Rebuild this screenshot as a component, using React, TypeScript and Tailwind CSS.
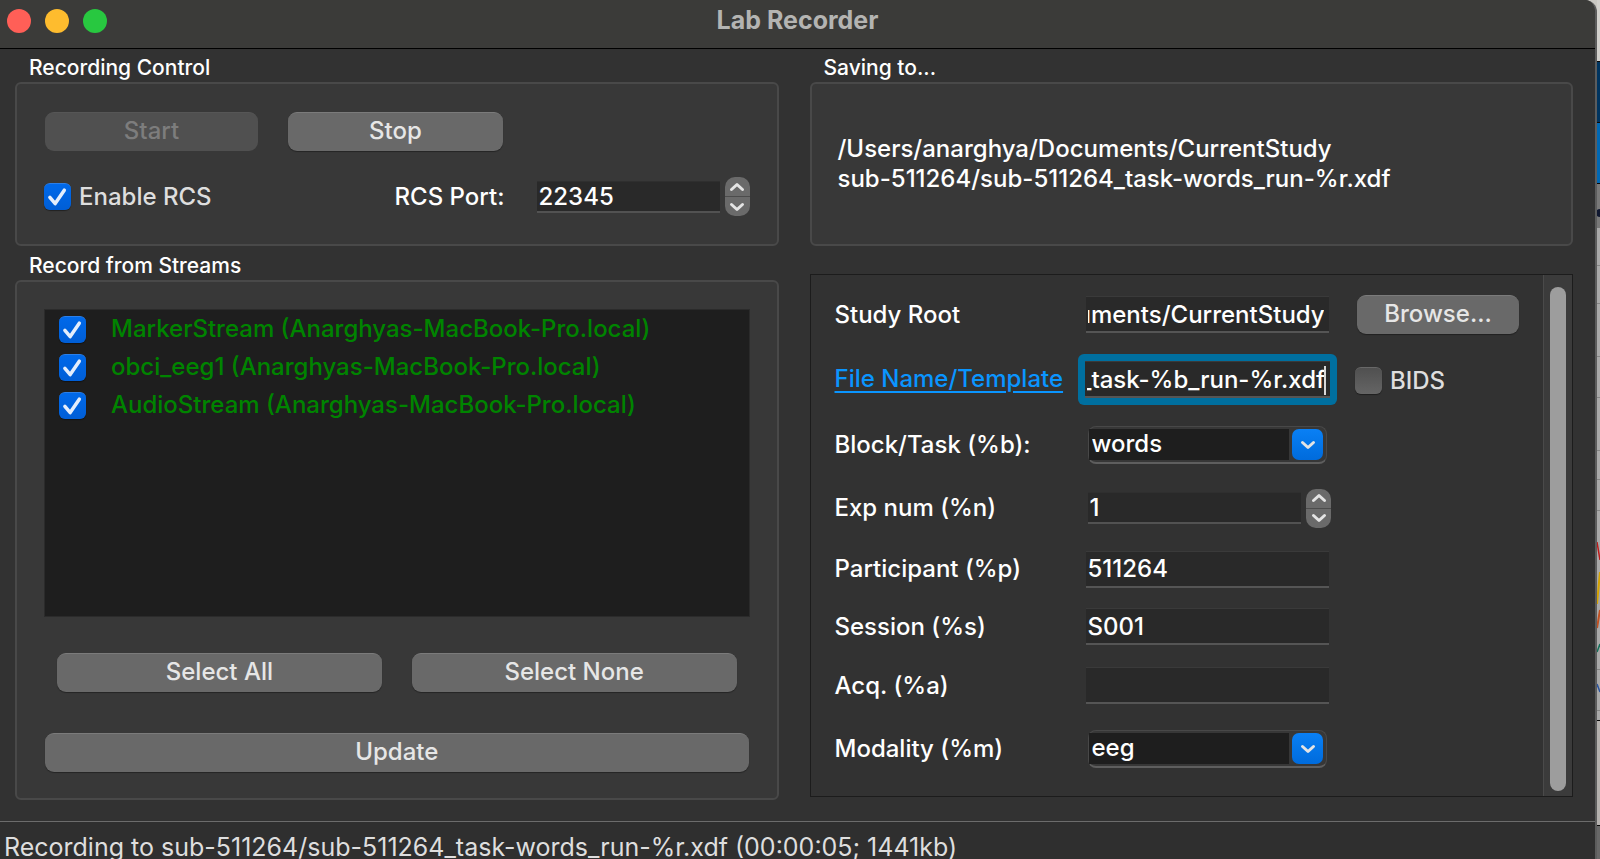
import { useEffect, useRef, useState, type ReactNode } from "react";

const STREAMS = ["MarkerStream", "obci_eeg1", "AudioStream"];
const HOST = "Anarghyas-MacBook-Pro.local";

function Check({ id, defaultChecked }: { id: string; defaultChecked?: boolean }) {
  return (
    <span className="relative flex size-[27px] shrink-0">
      <input
        id={id}
        type="checkbox"
        defaultChecked={defaultChecked}
        className="peer size-full appearance-none rounded-md border-t border-[#686868] bg-linear-to-b from-[#505050] to-[#656565] shadow-[0_1px_1px_rgba(0,0,0,0.4)] checked:border-[#2b7fe8] checked:from-[#0069ea] checked:to-[#005ed6]"
      />
      <svg
        viewBox="0 0 27 27"
        aria-hidden="true"
        className="pointer-events-none absolute inset-0 hidden size-full peer-checked:block"
      >
        <path
          d="M5.9 14.4 L11.2 20.6 L20.3 7.2"
          fill="none"
          stroke="#e4eefc"
          strokeWidth="3.5"
          strokeLinecap="round"
          strokeLinejoin="round"
        />
      </svg>
    </span>
  );
}

function PushButton({ children, disabled, className = "" }: { children: ReactNode; disabled?: boolean; className?: string }) {
  return (
    <button
      type="button"
      disabled={disabled}
      className={`flex h-[39px] items-center justify-center rounded-[9px] border-t border-[#7b7b7b] bg-[#696969] pb-[2px] text-[#e6e6e6] shadow-[0_1px_1px_rgba(0,0,0,0.35)] disabled:border-[#565656] disabled:bg-[#505050] disabled:text-[#7d7d7d] disabled:shadow-none ${className}`}
    >
      {children}
    </button>
  );
}

function Chevron({ up }: { up?: boolean }) {
  return (
    <svg viewBox="0 0 16 10" className="h-[10px] w-4" aria-hidden="true">
      <path
        d={up ? "M2.5 7.5 L8 2.5 L13.5 7.5" : "M2.5 2.5 L8 7.5 L13.5 2.5"}
        fill="none"
        stroke="#e4e4e4"
        strokeWidth="3"
        strokeLinecap="round"
        strokeLinejoin="round"
      />
    </svg>
  );
}

function Spinner({ id, initial }: { id: string; initial: number }) {
  const [value, setValue] = useState(initial);
  return (
    <div className="flex min-w-0 flex-1 items-center gap-[5px]">
      <input
        id={id}
        inputMode="numeric"
        value={value}
        onChange={(e) => setValue(Number(e.target.value) || 0)}
        className="h-8 min-w-0 flex-1 border-t border-b-2 border-t-[#2f2f2f] border-b-[#525252] bg-[#292929] px-[2px] text-white outline-none"
      />
      <div className="flex h-[39px] w-[25px] shrink-0 flex-col overflow-hidden rounded-[10px] bg-[#6a6a6a]">
        <button
          type="button"
          aria-label="Increase"
          onClick={() => setValue(value + 1)}
          className="flex flex-1 items-center justify-center border-b border-[#4c4c4c]"
        >
          <Chevron up />
        </button>
        <button
          type="button"
          aria-label="Decrease"
          onClick={() => setValue(value - 1)}
          className="flex flex-1 items-center justify-center"
        >
          <Chevron />
        </button>
      </div>
    </div>
  );
}

function TextField({ id, value, focused }: { id: string; value: string; focused?: boolean }) {
  const ref = useRef<HTMLInputElement>(null);
  useEffect(() => {
    if (ref.current) ref.current.scrollLeft = ref.current.scrollWidth;
  }, []);
  return (
    <div className={focused ? "relative flex-1 rounded-md bg-[#006f9f] p-[7px]" : "relative mx-2 flex-1"}>
      <input
        ref={ref}
        id={id}
        defaultValue={value}
        className="block h-[37px] w-full border-t border-b-2 border-t-[#3a3a3a] border-b-[#555555] bg-[#292929] pr-[5px] pl-[2px] text-white outline-none"
      />
      {focused && <span className="absolute top-3 right-[11px] h-[29px] w-[2px] bg-[#d8d8d8]" />}
    </div>
  );
}

function Combo({ id, value, options }: { id: string; value: string; options: string[] }) {
  return (
    <div className="relative mx-[10px] flex h-[38px] flex-1 rounded-lg border border-b-2 border-[#484848] border-b-[#5e5e5e] bg-[#373737]">
      <select
        id={id}
        defaultValue={value}
        className="my-[2px] mr-[37px] min-w-0 flex-1 appearance-none bg-[#1e1e1e] px-[3px] pb-[2px] text-white outline-none"
      >
        {options.map((o) => (
          <option key={o}>{o}</option>
        ))}
      </select>
      <span className="pointer-events-none absolute top-[2px] right-[3px] flex size-[31px] items-center justify-center rounded-[7px] bg-linear-to-b from-[#0a80f5] to-[#006bdc]">
        <Chevron />
      </span>
    </div>
  );
}

function GroupTitle({ children }: { children: ReactNode }) {
  return <h2 className="flex h-[33px] shrink-0 items-center px-[14px] pt-[5px] text-[21px] leading-6 text-white">{children}</h2>;
}

function Backdrop() {
  return (
    <svg viewBox="0 0 3 859" preserveAspectRatio="none" className="w-[3px] shrink-0 self-stretch" aria-hidden="true">
      <rect width="3" height="859" fill="#a9a9a9" />
      <rect width="3" height="61" fill="#d2d0cc" />
      <rect y="61" width="3" height="62" fill="#00345f" />
      <rect y="123" width="3" height="60" fill="#0068b4" />
      <path d="M0 61.5H3M0 122.5H3M0 183.5H3M0 720.5H3M0 825.5H3" stroke="#080808" />
      <rect y="184" width="3" height="44" fill="#797979" />
      <circle cx="3" cy="213" r="4" fill="#101830" />
      <path d="M0 265.5H3M0 303.5H3M0 356.5H3M0 397.5H3M0 450.5H3M0 479.5H3M0 510.5H3M0 669.5H3M0 710.5H3" stroke="#858585" />
      <path d="M0 542L3 560" stroke="#c01818" strokeWidth="1.5" />
      <path d="M0 604L3 572" stroke="#d6a400" strokeWidth="2" />
      <path d="M0 628L3 610" stroke="#c25020" strokeWidth="2" />
      <path d="M0 652L3 644" stroke="#13705a" strokeWidth="1.5" />
      <path d="M0 684L3 692" stroke="#2b55a0" strokeWidth="1.5" />
      <rect y="721" width="3" height="104" fill="#b4b1ae" />
      <rect y="826" width="3" height="33" fill="#686868" />
    </svg>
  );
}

const LABEL = "self-center text-white";

export default function App() {
  return (
    <div className="flex min-h-screen bg-[#c9c7c2] font-['Inter','Liberation_Sans',sans-serif] text-[24px] leading-[30px] font-medium">
      <div className="flex min-w-0 flex-1 flex-col overflow-hidden rounded-tr-xl border-r-2 border-[#5c5c5c] bg-[#323232]">
        <header className="relative flex h-[49px] shrink-0 items-center justify-center border-b border-black bg-[#3b3b39] pb-2">
          <div className="absolute top-[9px] left-[7px] flex gap-[14px]">
            <button type="button" aria-label="Close" className="size-6 rounded-full bg-[#ff5f57]" />
            <button type="button" aria-label="Minimize" className="size-6 rounded-full bg-[#febc2e]" />
            <button type="button" aria-label="Zoom" className="size-6 rounded-full bg-[#28c840]" />
          </div>
          <h1 className="text-[25px] font-bold text-[#b4b4b2]">Lab Recorder</h1>
        </header>

        <main className="grid flex-1 grid-cols-2 gap-x-[31px] pr-[22px] pb-[21px] pl-[15px]">
          <div className="flex min-w-0 flex-col">
            <GroupTitle>Recording Control</GroupTitle>
            <section className="mb-px h-[164px] shrink-0 rounded-md border-2 border-[#494949] bg-[#383838] px-[27px] pt-7">
              <div className="flex gap-[30px] pl-px">
                <PushButton disabled className="w-[213px]">
                  Start
                </PushButton>
                <PushButton className="w-[215px]">Stop</PushButton>
              </div>
              <div className="mt-[26px] flex items-center">
                <Check id="rcs" defaultChecked />
                <label htmlFor="rcs" className="pl-2 text-[#dedede]">
                  Enable RCS
                </label>
                <div className="ml-auto flex w-[355px] items-center">
                  <label htmlFor="port" className="w-[142px] text-white">
                    RCS Port:
                  </label>
                  <Spinner id="port" initial={22345} />
                </div>
              </div>
            </section>

            <GroupTitle>Record from Streams</GroupTitle>
            <section className="flex flex-1 flex-col rounded-md border-2 border-[#494949] bg-[#383838] px-[27px] pt-[27px] pb-[26px]">
              <ul className="flex min-h-[307px] flex-1 flex-col gap-2 border border-[#2b2b2b] bg-[#1e1e1e] px-[14px] pt-1">
                {STREAMS.map((name) => (
                  <li key={name} className="flex h-[30px] items-center gap-[25px]">
                    <Check id={name} defaultChecked />
                    <label htmlFor={name} className="whitespace-nowrap text-[#008400]">
                      {name} ({HOST})
                    </label>
                  </li>
                ))}
              </ul>
              <div className="mt-9 flex gap-[30px] px-[13px]">
                <PushButton className="flex-1">Select All</PushButton>
                <PushButton className="flex-1">Select None</PushButton>
              </div>
              <PushButton className="mx-px mt-[41px]">Update</PushButton>
            </section>
          </div>

          <div className="flex min-w-0 flex-col">
            <GroupTitle>Saving to...</GroupTitle>
            <section className="flex h-[164px] shrink-0 items-center rounded-md border-2 border-[#494949] bg-[#383838] px-[26px] text-white">
              <p>
                /Users/anarghya/Documents/CurrentStudy
                <br />
                sub-511264/sub-511264_task-words_run-%r.xdf
              </p>
            </section>

            <section className="mt-7 mb-[3px] flex flex-1 border border-[#1c1c1c]">
              <form
                className="grid min-w-0 flex-1 grid-cols-[243px_minmax(0,1fr)_182px] grid-rows-[39px_51px_40px_46px_36px_39px_39px_48px] content-start gap-y-5 pt-5 pr-6 pl-6"
                onSubmit={(e) => e.preventDefault()}
              >
                <label htmlFor="root" className={LABEL}>Study Root</label>
                <div className="flex items-center">
                  <TextField id="root" value="/Users/anarghya/Documents/CurrentStudy" />
                </div>
                <PushButton className="ml-5">Browse...</PushButton>

                <a href="#template" className="self-center justify-self-start pb-[2px] text-[#0a95ff] underline decoration-2 underline-offset-4">
                  File Name/Template
                </a>
                <div className="flex items-center" id="template">
                  <label htmlFor="tpl" className="sr-only">File Name/Template</label>
                  <TextField id="tpl" value="sub-%p/sub-%p_task-%b_run-%r.xdf" focused />
                </div>
                <div className="ml-[18px] flex items-center gap-2 pt-[2px]">
                  <Check id="bids" />
                  <label htmlFor="bids" className="text-[#dedede]">BIDS</label>
                </div>

                <label htmlFor="block" className={LABEL}>Block/Task (%b):</label>
                <div className="flex items-center">
                  <Combo id="block" value="words" options={["words", "rest"]} />
                </div>
                <span />

                <label htmlFor="exp" className={LABEL}>Exp num (%n)</label>
                <div className="flex items-center pr-[6px] pl-[10px]">
                  <Spinner id="exp" initial={1} />
                </div>
                <span />

                <label htmlFor="part" className={LABEL}>Participant (%p)</label>
                <div className="flex items-center">
                  <TextField id="part" value="511264" />
                </div>
                <span />

                <label htmlFor="sess" className={LABEL}>Session (%s)</label>
                <div className="flex items-center">
                  <TextField id="sess" value="S001" />
                </div>
                <span />

                <label htmlFor="acq" className={LABEL}>Acq. (%a)</label>
                <div className="flex items-center">
                  <TextField id="acq" value="" />
                </div>
                <span />

                <label htmlFor="mod" className={LABEL}>Modality (%m)</label>
                <div className="flex items-center">
                  <Combo id="mod" value="eeg" options={["eeg", "meg", "beh"]} />
                </div>
                <span />
              </form>
              <div className="flex w-[29px] shrink-0 justify-center border-l border-[#4a4a4a] bg-[#3b3b3b] pt-3 pb-[5px]">
                <div className="w-4 rounded-full bg-[#9d9d9d]" />
              </div>
            </section>
          </div>
        </main>

        <footer className="h-[38px] shrink-0 overflow-hidden border-t border-[#6c6c6c] bg-[#2f2f2f] pt-[10px] pl-1 text-[25px] font-normal whitespace-nowrap text-[#dedede]">
          Recording to sub-511264/sub-511264_task-words_run-%r.xdf (00:00:05; 1441kb)
        </footer>
      </div>
      <Backdrop />
    </div>
  );
}
